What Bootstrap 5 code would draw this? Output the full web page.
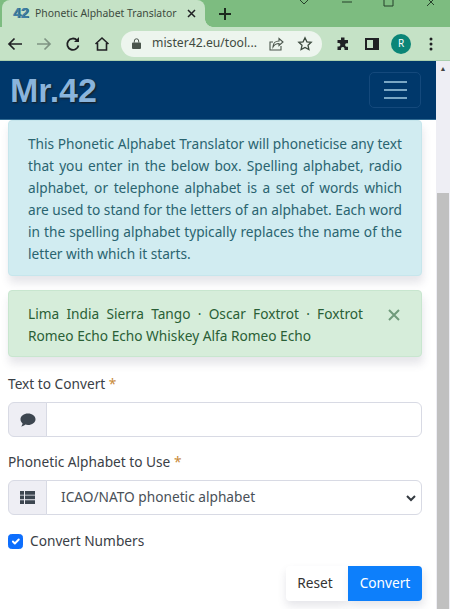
<!DOCTYPE html>
<html lang="en">
<head>
  <meta charset="UTF-8">
  <title>Phonetic Alphabet Translator</title>
  <link href="https://cdn.jsdelivr.net/npm/bootstrap@5.3.0/dist/css/bootstrap.min.css" rel="stylesheet" />
  <style>
    html, body { height: 609px; overflow: hidden; }
    body { font-family: "Noto Sans", "Open Sans", sans-serif; font-size: 13.7px; color: #212529; background: #fff; }
    .tab-strip { height: 27px; background: #7dbc80; overflow: hidden; }
    .tab-active { position: relative; width: 203px; margin-left: 2px; height: 27px; background: #c5e2c6; border-radius: 8px 8px 0 0; padding: 0 9px 0 11px; font-size: 10.4px; color: #3c4a3e; }
    .tab-active::after { content: ""; position: absolute; right: -8px; bottom: 0; width: 8px; height: 8px; background: radial-gradient(circle at 100% 0, transparent 7.5px, #c5e2c6 8px); }
    .tab-favicon { font-family: "Liberation Sans", sans-serif; font-weight: 700; font-size: 14px; color: #3f7fa6; text-shadow: 1px 0 0 #2c5f7a; width: 22px; }
    .tab-title { flex: 1; white-space: nowrap; overflow: hidden; }
    .tab-plus { margin-left: 14px; }
    .win-btns { margin-left: auto; margin-right: 16px; }
    .tool-bar { height: 34px; background: #c5e2c6; border-bottom: 1px solid #a9cfae; padding: 0 0 0 7px; }
    .tool-ico { width: 16px; height: 16px; flex: none; }
    .tool-gap { margin-right: 13px; }
    .omni { width: 201px; height: 26px; margin: 0 13px 0 11px; background: #edf5ee; border-radius: 13px; padding: 0 9px 0 11px; font-size: 12.2px; color: #3f4a40; }
    .omni-url { flex: 1; white-space: nowrap; margin-left: 11px; }
    .avatar { width: 20px; height: 20px; border-radius: 50%; background: #0b8577; color: #fff; font-size: 10px; margin-left: 11px; margin-right: 18px; }
    .page-wrap { height: 548px; }
    .page-main { width: 436px; flex: none; overflow: hidden; }
    .scroll-track { width: 14px; flex: none; background: #eeeef4; padding-left: 1px; padding-right: 1px; }
    .scroll-up { height: 16px; color: #444; font-size: 7px; line-height: 16px; text-align: center; }
    .scroll-gap { height: 116px; }
    .scroll-thumb { height: 416px; background: #c0c0c0; }
    .mr-bar { height: 59px; background: #00386b; border-bottom: 1px solid #2f6a93; padding: 0 15px 0 10px; }
    .mr-brand { font-family: "Liberation Sans", sans-serif; font-weight: 700; font-size: 34px; color: #8ab4dc; text-shadow: 1px 1px 2px #1a1a1a; line-height: 1; }
    .mr-toggle { width: 52px; height: 36px; border: 1px solid #14497c; border-radius: 5px; }
    .mr-line { display: block; width: 23px; height: 2px; background: #7aa7c4; margin: 3px 0; }
    .page-body { padding: 0 14px 0 8px; }
    .note-box { margin: 0; border-radius: 4px; padding: 12px 19px 10px; line-height: 22px; text-align: justify; box-shadow: 1px 7px 9px rgba(60, 60, 90, .13); }
    .note-info { background: #d1ecf1; border: 1px solid #c6e6ec; color: #2a6470; height: 156px; }
    .note-ok { background: #d6edda; border: 1px solid #c8e6cf; color: #2a5f36; height: 67px; margin-top: 14px; padding-right: 58px; }
    .note-x { position: absolute; top: 18px; right: 21px; width: 12px; height: 12px; }
    .fld-label { margin: 0 0 9px; line-height: 18px; color: #3a4046; }
    .req { color: #c98a3a; }
    .fld-block { margin-top: 18px; }
    .fld-block + .fld-block { margin-top: 16px; }
    .fld-group { height: 35px; }
    .fld-addon { width: 39px; padding: 0; justify-content: center; background: #eeeef4; border-color: #d8dae4; }
    .fld-control { height: 35px; font-size: 13.7px; border-color: #d8dae4; color: #495057; }
    .select-pad { padding-left: 14px; background-size: 10px 8px; background-position: right 5px center; background-image: url("data:image/svg+xml,%3csvg xmlns='http://www.w3.org/2000/svg' viewBox='0 0 10 8'%3e%3cpath fill='none' stroke='%23343a40' stroke-width='2' d='M1 2l4 4 4-4'/%3e%3c/svg%3e"); }
    .chk-row { gap: 7px; margin-top: 17px; height: 18px; color: #3a4046; }
    .chk-row .form-check-input { width: 15px; height: 15px; margin: 0; }
    .btn-row { margin-top: 16px; }
    .btn-reset { width: 62px; height: 35px; padding: 0 4px 0 0; font-size: 13.7px; background: #fff; border: 0; border-radius: 4px 0 0 4px; color: #333; box-shadow: 0 5px 9px rgba(60, 60, 90, .13); }
    .btn-convert { width: 74px; height: 35px; padding: 0; font-size: 13.7px; background: #0d7ffb; border: 0; border-radius: 0 4px 4px 0; box-shadow: 2px 5px 9px rgba(60, 60, 90, .13); }
  </style>
</head>
<body>

  <div class="tab-strip d-flex">
    <div class="tab-active d-flex align-items-center">
      <span class="tab-favicon">42</span>
      <span class="tab-title">Phonetic Alphabet Translator</span>
      <svg width="9" height="9" viewBox="0 0 9 9" fill="none" stroke="#202124" stroke-width="1.500"><path d="M1 1l7 7M8 1 1 8"/></svg>
    </div>
    <svg class="tab-plus align-self-center" width="12" height="12" viewBox="0 0 12 12" fill="none" stroke="#1c2a1d" stroke-width="2"><path d="M6 0v12M0 6h12"/></svg>
    <svg class="win-btns align-self-start" width="134" height="7" viewBox="0 0 134 7" fill="none" stroke="#26402a" stroke-width="1"><path d="M0 0l4 4 4-4M42 2h10M84-2h9v8h-9zM127-2l8 8M135-2l-8 8"/></svg>
  </div>

  <div class="tool-bar d-flex align-items-center">
    <svg class="tool-ico tool-gap" viewBox="0 0 16 16" fill="none" stroke="#202124" stroke-width="1.700"><path d="M15 8H2M7.500 2.500 2 8l5.500 5.500"/></svg>
    <svg class="tool-ico tool-gap" viewBox="0 0 16 16" fill="none" stroke="#7f9483" stroke-width="1.700"><path d="M1 8h13M8.500 2.500 14 8l-5.500 5.500"/></svg>
    <svg class="tool-ico tool-gap" viewBox="0 0 16 16" fill="none" stroke="#202124" stroke-width="1.800"><path d="M13.500 9.500A5.700 5.700 0 1 1 12 4.200"/><path d="M14 1v5H9" fill="#202124" stroke="none"/></svg>
    <svg class="tool-ico" viewBox="0 0 16 16" fill="none" stroke="#202124" stroke-width="1.600"><path d="M1.500 8 8 2l6.500 6M3.500 7v7h9V7"/></svg>
    <div class="omni d-flex align-items-center">
      <svg width="9" height="11" viewBox="0 0 9 11" fill="#4a554c"><path d="M1 4.500h7a1 1 0 0 1 1 1V10a1 1 0 0 1-1 1H1a1 1 0 0 1-1-1V5.500a1 1 0 0 1 1-1z"/><path d="M2.300 4.500V3a2.200 2.200 0 0 1 4.400 0v1.500" fill="none" stroke="#4a554c" stroke-width="1"/></svg>
      <span class="omni-url">mister42.eu/tool...</span>
      <svg class="tool-ico tool-gap" viewBox="0 0 16 16" fill="none" stroke="#4a554c" stroke-width="1.100"><path d="M13 10v4H2V6h3"/><path d="M5 11c0-4 3-6 6-6V2.500L15 6l-4 3.500V7.500C8.500 7.500 6.500 8.500 5 11z"/></svg>
      <svg class="tool-ico" viewBox="0 0 16 16" fill="none" stroke="#3c4a3e" stroke-width="1.300"><path d="m8 1.800 1.900 4 4.300.5-3.200 3 .9 4.300L8 11.400l-3.900 2.200.9-4.300-3.200-3 4.300-.5z"/></svg>
    </div>
    <svg class="tool-ico tool-gap" viewBox="0 0 16 16" fill="#202124"><path d="M6 1.500h3.500V4H13v3.300h-1.500a1.800 1.800 0 0 0 0 3.500H13V14H9.500v-1.500a1.800 1.800 0 0 0-3.500 0V14H2.500v-3.500H4a1.800 1.800 0 0 0 0-3.500H2.500V4H6z"/></svg>
    <svg class="tool-ico" viewBox="0 0 16 16" fill="none" stroke="#202124" stroke-width="2"><path d="M2 3h12v10H2z"/><path d="M10 3h4v10h-4z" fill="#202124"/></svg>
    <div class="avatar d-flex align-items-center justify-content-center">R</div>
    <svg width="4" height="14" viewBox="0 0 4 14" fill="#202124"><circle cx="2" cy="2" r="1.500"/><circle cx="2" cy="7" r="1.500"/><circle cx="2" cy="12" r="1.500"/></svg>
  </div>

  <div class="page-wrap d-flex">
    <div class="page-main">
      <div class="mr-bar d-flex align-items-center justify-content-between">
        <span class="mr-brand">Mr.42</span>
        <span class="mr-toggle d-flex flex-column align-items-center justify-content-center">
          <span class="mr-line"></span><span class="mr-line"></span><span class="mr-line"></span>
        </span>
      </div>
      <div class="page-body">
        <div class="alert note-box note-info">This Phonetic Alphabet Translator will phoneticise any text that you enter in the below box. Spelling alphabet, radio alphabet, or telephone alphabet is a set of words which are used to stand for the letters of an alphabet. Each word in the spelling alphabet typically replaces the name of the letter with which it starts.</div>
        <div class="alert note-box note-ok position-relative">Lima India Sierra Tango · Oscar Foxtrot · Foxtrot Romeo Echo Echo Whiskey Alfa Romeo Echo
          <svg class="note-x" viewBox="0 0 12 12" fill="none" stroke="#6f9a7b" stroke-width="2"><path d="M1 1l10 10M11 1 1 11"/></svg>
        </div>
        <form>
          <div class="fld-block">
            <label class="fld-label d-block">Text to Convert <span class="req">*</span></label>
            <div class="input-group fld-group">
              <span class="input-group-text fld-addon">
                <svg width="16" height="14" viewBox="0 0 16 14" fill="#3d4650"><path d="M8 .5c4.200 0 7.500 2.500 7.500 5.700S12.200 12 8 12c-1 0-1.900-.1-2.700-.4C4.300 12.500 2.800 13.400 1 13.500c.8-.8 1.400-2 1.600-3.100C1.300 9.300.5 7.800.5 6.200.5 3 3.800.5 8 .5z"/></svg>
              </span>
              <input type="text" class="form-control fld-control">
            </div>
          </div>
          <div class="fld-block">
            <label class="fld-label d-block">Phonetic Alphabet to Use <span class="req">*</span></label>
            <div class="input-group fld-group">
              <span class="input-group-text fld-addon">
                <svg width="15" height="13" viewBox="0 0 15 13" fill="#3d4650"><path d="M0 0h4v3.700H0zM5 0h10v3.700H5zM0 4.600h4v3.700H0zM5 4.600h10v3.700H5zM0 9.200h4V13H0zM5 9.200h10V13H5z"/></svg>
              </span>
              <select class="form-select fld-control select-pad"><option>ICAO/NATO phonetic alphabet</option></select>
            </div>
          </div>
          <div class="chk-row d-flex align-items-center">
            <input class="form-check-input" type="checkbox" checked>
            <label>Convert Numbers</label>
          </div>
          <div class="btn-row d-flex justify-content-end">
            <button type="button" class="btn btn-reset">Reset</button>
            <button type="button" class="btn btn-primary btn-convert">Convert</button>
          </div>
        </form>
      </div>
    </div>
    <div class="scroll-track">
      <div class="scroll-up">▲</div>
      <div class="scroll-gap"></div>
      <div class="scroll-thumb"></div>
    </div>
  </div>

  <script src="https://cdn.jsdelivr.net/npm/bootstrap@5.3.0/dist/js/bootstrap.bundle.min.js"></script>
</body>
</html>
